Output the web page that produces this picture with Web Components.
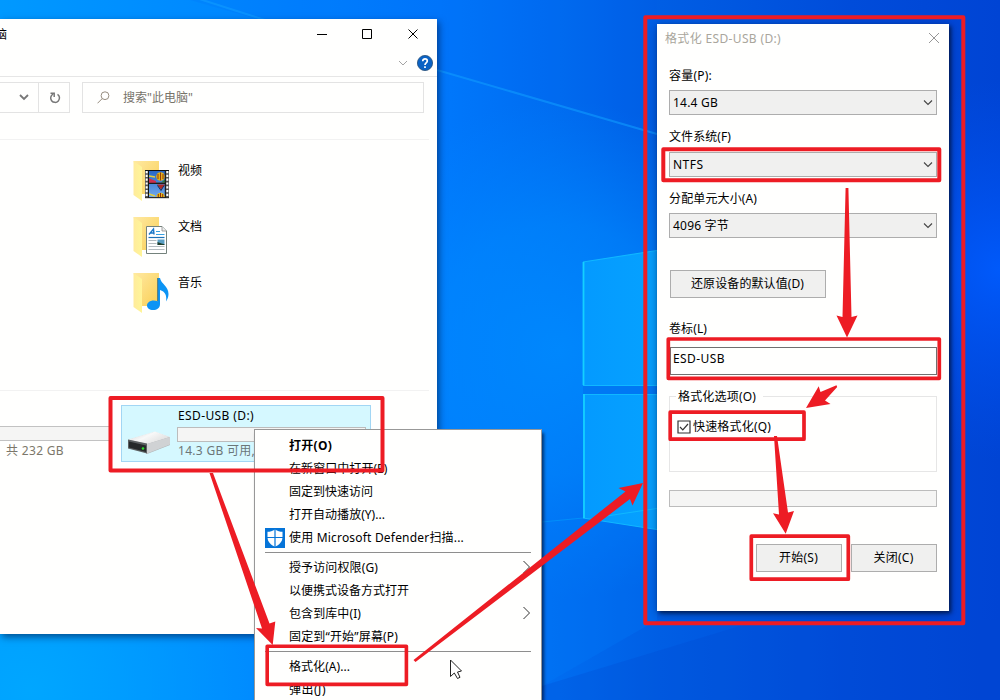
<!DOCTYPE html>
<html lang="zh-CN">
<head>
<meta charset="utf-8">
<title>格式化 ESD-USB</title>
<style>
html,body{margin:0;height:100%;overflow:hidden}
body{font-family:"Noto Sans","Noto Sans CJK SC",sans-serif;font-size:12px;line-height:16px;color:#000}
</style>
</head>
<body>
<desk-top></desk-top>
<script>
const define = (name, html, init) => {
  const t = document.createElement('template');
  t.innerHTML = html;
  customElements.define(name, class extends HTMLElement {
    connectedCallback() {
      if (this.shadowRoot) return;
      this.attachShadow({mode: 'open'}).appendChild(t.content.cloneNode(true));
      if (init) init(this, this.shadowRoot);
    }
  });
};

/* One-line label whose tracking is adjusted to a given width */
define('fit-text', `<style>
:host{display:inline-block;white-space:nowrap;flex:none}
span{display:inline-block}
</style><span><slot></slot></span>`, (el, root) => {
  const w = parseFloat(el.getAttribute('w'));
  if (!w) return;
  const s = root.querySelector('span');
  const natural = s.getBoundingClientRect().width;
  s.style.letterSpacing = ((w - natural) / el.textContent.length) + 'px';
});

define('desk-wallpaper', `<style>
:host{position:absolute;inset:0;display:block}
svg{display:block}
</style>
<svg width="1000" height="700" viewBox="0 0 1000 700">
<defs>
<linearGradient id="b" x1="0" y1="0" x2="1" y2="0"><stop offset="0" stop-color="#0099ff"/><stop offset=".3" stop-color="#0082ff"/><stop offset=".44" stop-color="#0078fc"/><stop offset=".56" stop-color="#006cf0"/><stop offset=".66" stop-color="#005ee4"/><stop offset=".85" stop-color="#004cda"/><stop offset="1" stop-color="#0044d4"/></linearGradient>
<radialGradient id="g" gradientUnits="userSpaceOnUse" cx="560" cy="350" r="250"><stop offset="0" stop-color="#008cff" stop-opacity=".85"/><stop offset=".5" stop-color="#008aff" stop-opacity=".6"/><stop offset="1" stop-color="#0084ff" stop-opacity="0"/></radialGradient>
<radialGradient id="r" gradientUnits="userSpaceOnUse" cx="1000" cy="270" r="190"><stop offset="0" stop-color="#005cff" stop-opacity=".9"/><stop offset="1" stop-color="#0050f0" stop-opacity="0"/></radialGradient>
<radialGradient id="l" gradientUnits="userSpaceOnUse" cx="30" cy="690" r="300"><stop offset="0" stop-color="#00a8ff" stop-opacity=".9"/><stop offset="1" stop-color="#009cff" stop-opacity="0"/></radialGradient>
<linearGradient id="p" x1="0" x2="1"><stop offset="0" stop-color="#049aff"/><stop offset="1" stop-color="#06a2ff"/></linearGradient>
</defs>
<rect width="1000" height="700" fill="url(#b)"/>
<rect width="1000" height="700" fill="url(#g)"/>
<rect width="1000" height="700" fill="url(#r)"/>
<rect width="1000" height="700" fill="url(#l)"/>
<path d="M437 70L657 134V0H190z" fill="#0058e8" opacity=".1"/>
<path d="M190 -4L265 20M437 70L657 134" stroke="#109cff" stroke-width="2" opacity=".6"/>
<path d="M542 686L760 620H1000V700H542z" fill="#0048d0" opacity=".25"/>
<path d="M542 522L583 518L657 529V620L542 686z" fill="#007cf8" opacity=".3"/>
<path d="M583 385H660V394H583z" fill="#0078f4"/>
<path d="M583 262L660 250V385H583z" fill="url(#p)"/>
<path d="M583 394H660V530L583 518z" fill="url(#p)"/>
<path d="M583 262L660 250M583 385.500H660M583 394.500H660M583 518L660 530M600 517L660 508" fill="none" stroke="#10b8ff" stroke-width="1.100"/>
<path d="M583.500 262V385M584 394V518" stroke="#14d0ff" stroke-width="1.800"/>
<path d="M542 522L583 518" stroke="#00a0ff" opacity=".6"/>
</svg>`);

define('folder-item', `<style>
:host{display:flex;height:56px;align-items:flex-start}
svg{margin:-2px 5px 0 0;flex:none}
fit-text{margin-top:1px}
</style>
<svg width="40" height="42" viewBox="0 0 40 42">
<defs><linearGradient id="f" x2="1"><stop offset="0" stop-color="#ffeb9c"/><stop offset="1" stop-color="#fff598"/></linearGradient>
<linearGradient id="k" x2="1" y2="1"><stop offset="0" stop-color="#ffe9a2"/><stop offset="1" stop-color="#f9cf55"/></linearGradient>
<linearGradient id="sky" x2="0" y2="1"><stop offset="0" stop-color="#2868c8"/><stop offset="1" stop-color="#70a8ec"/></linearGradient></defs>
<path d="M.500 1H26V34H9z" fill="url(#k)"/>
<path d="M.500 1L9 7V41L.500 35z" fill="url(#f)"/>
<g id="art"></g></svg><fit-text w="24.500"><slot></slot></fit-text>`, (el, root) => {
  const arts = {
    video: `<path d="M12 10H36V38H12z" fill="#555"/><path d="M13.700 11V38M34.300 11V38" stroke="#fff" stroke-width="2" stroke-dasharray="2.200 1.600"/><path d="M15.500 11H32V22.500H15.500zM15.500 24H32V37H15.500z" fill="url(#sky)"/><path d="M15.500 18L19 19.500 23 21V23H15.500z" fill="#cc3050"/><path d="M16 16l6 1M16 34l6 2" stroke="#e4d040" stroke-width="1.500"/><circle cx="27.500" cy="16.500" r="4.300" fill="#e7b018"/><path d="M27.500 12.500v8M25 14v5M30 14v5" stroke="#843010" stroke-width=".9"/><path d="M28 22.500l4-3v3z" fill="#30803c"/><path d="M24 24.500h8l-4 5z" fill="#b02a28"/><path d="M24.500 25.500l3.500 5 3-5" stroke="#182c58" fill="none"/><path d="M23.300 37a4.300 4.300 0 1 1 8.600 0z" fill="#e8bc18"/><path d="M27.500 33v4M25.300 34v3M29.700 34v3" stroke="#842010" stroke-width=".9"/><path d="M12 37.700h24" stroke="#222"/><path d="M15.500 23.300h16.700M15.500 10.500v27M32.300 10.500v27M12 10.500h24" stroke="#111"/>`,
    doc: `<path d="M13.500 10.500H29L33.500 15V37.500H13.500z" fill="#fff" stroke="#74827c"/><path d="M29 10.500V15h4.500" fill="#eee" stroke="#8a8a8a" stroke-width=".8"/><path d="M16 18.500L20.500 13l.5 5.500M17.500 17h3.500" stroke="#1b78c8" stroke-width="1.400" fill="none"/><path d="M23 15.500h4M23 18.500h8.500" stroke="#38a0e0"/><path d="M15.500 21.500h16" stroke="#1d72b8" stroke-width="1.200"/><path d="M15.500 24.500h8M15.500 27.500h8M15.500 30.500h16M15.500 33.500h16" stroke="#b4bcc0"/><path d="M24.500 23.500h7v5.500h-7z" fill="#5b9fc4"/><path d="M24.500 26l4 1.500 3 .8v.7h-7z" fill="#22402c"/>`,
    music: `<path d="M25 6h2c1 6 8.500 8 8.500 16 0 3-1 5-2.500 7.500 1-6-1-10-6-11.500V32c0 4-3 6-7 6-3.500 0-6-1.800-6-4.500s3-5 6.500-5c1.500 0 3 .300 4.500.8z" fill="#0c94f4"/><path d="M24.700 6V29" stroke="#3a6f86" stroke-width="1"/>`
  };
  root.querySelector('#art').innerHTML = arts[el.getAttribute('kind')];
});

define('drive-tile', `<style>
:host{display:flex;box-sizing:border-box;width:250px;height:57px;background:#d5f8ff;border:1px solid #a2d6f4}
svg{margin:25px 6px 0 5px;flex:none}
.c{display:flex;flex-direction:column;padding-top:2px;width:189px}
.bar{box-sizing:border-box;height:15px;width:189px;border:1px solid #bcbcbc;background:#f5f5f4;margin:3px 0 1px -1px}
.n{color:#6c7678}
</style>
<svg width="45" height="26" viewBox="0 0 45 26"><defs><linearGradient id="d" x2="1" y2=".6"><stop offset="0" stop-color="#d0d2d4"/><stop offset=".5" stop-color="#f8f8f8"/><stop offset="1" stop-color="#dedede"/></linearGradient></defs>
<path d="M1 9L28 1 43 6.500V14L20 23z" fill="#b0b3b5"/><path d="M1 8.500L28 .500 43 6 20 13z" fill="url(#d)"/><path d="M1 8.500L20 12.500V22.500L1 17.500z" fill="#5c6062"/><path d="M2 10.500L19 14.500v6.500L2 16.500z" fill="#26292a"/><path d="M20 13L43 6V13.500L20 22.500z" fill="#d0d2d4"/><circle cx="16" cy="17.500" r="1.300" fill="#2be02b"/></svg>
<div class="c"><fit-text w="76">ESD-USB (D:)</fit-text><div class="bar"></div><fit-text class="n" w="77">14.3 GB 可用,</fit-text></div>`);

define('explorer-window', `<style>
:host{position:absolute;left:0;top:19px;width:437px;height:615px;background:#fffffe;display:flex;flex-direction:column;box-shadow:2px 3px 7px rgba(0,25,70,.6)}
.title{height:30px;display:flex;align-items:center;overflow:hidden}
.title fit-text{margin:2px 0 0 -5px;flex:1}
.title svg{margin-right:16px}
.ribbon{height:27px;border-bottom:1px solid #e6e6e6;display:flex;align-items:center;justify-content:flex-end;padding-right:4px;gap:9px}
.nav{display:flex;height:31px;margin-top:5px}
.box{box-sizing:border-box;border:1px solid #e3e3e3;display:flex;align-items:center}
.a{width:39px;border-left:0;justify-content:flex-end;padding-right:9px}
.b{width:32px;margin-left:-1px;justify-content:center;padding-left:2px}
.s{width:342px;margin-left:12px;padding-left:14px;color:#77736a}
.s fit-text{margin:1px 0 0 13px}
.line{height:1px;background:#f2f2f2;width:429px}
.folders{padding:22px 0 0 133px;height:228px}
.drives{display:flex;justify-content:space-between;padding:14px 66px 0 0}
.prev{width:109px;padding-top:21px}
.pb{box-sizing:border-box;height:15px;border:1px solid #c2c2c2;border-width:1px 0;background:#f5f5f4}
.prev fit-text{margin:2px 0 0 6px;color:#7c776a}
</style>
<div class="title"><fit-text>脑</fit-text><svg width="106" height="14" viewBox="0 0 106 14" fill="none" stroke="#000"><path d="M2 7.500H12M47.500 2.500H56.500V11.500H47.500zM93.500 2.500L102.500 11.500M102.500 2.500L93.500 11.500"/></svg></div>
<div class="ribbon"><svg width="10" height="6" viewBox="0 0 10 6" fill="none" stroke="#a4a4a4"><path d="M1 1L5 5 9 1"/></svg>
<svg width="16" height="16" viewBox="0 0 16 16"><circle cx="8" cy="8" r="7.600" fill="#0a62c4" stroke="#244e78" stroke-width=".8"/><path d="M5.700 6.200C5.700 3 10.300 3.200 10.300 6 10.300 8 8 7.800 8 10M8 11.300V13" stroke="#fff" stroke-width="1.700" fill="none"/></svg></div>
<div class="nav"><div class="box a"><svg width="10" height="7" viewBox="0 0 10 7" fill="none" stroke="#777" stroke-width="1.800"><path d="M1 1L5 5 9 1"/></svg></div>
<div class="box b"><svg width="12" height="13" viewBox="0 0 12 13" fill="none" stroke="#777" stroke-width="1.500"><path d="M4 3.100A4.400 4.400 0 1 0 8.500 3.300M1.500 2.200H5.200V6"/></svg></div>
<div class="box s"><svg width="13" height="13" viewBox="0 0 13 13" fill="none" stroke="#978d80"><circle cx="8" cy="4.700" r="3.900"/><path d="M5.200 7.600L.500 12.300"/></svg><fit-text w="70">搜索"此电脑"</fit-text></div></div>
<div class="line" style="margin-top:26px"></div>
<div class="folders"><folder-item kind="video">视频</folder-item><folder-item kind="doc">文档</folder-item><folder-item kind="music">音乐</folder-item></div>
<div class="line"></div>
<div class="drives"><div class="prev"><div class="pb"></div><fit-text w="58">共 232 GB</fit-text></div><drive-tile></drive-tile></div>`);

define('menu-item', `<style>
:host{display:flex;align-items:center;height:23px;padding:0 10px 0 10px}
:host([bold]){font-weight:700}
.i{width:24px;height:20px;flex:none}
.t{flex:1}.i svg{display:block}.arr{display:none;margin-top:-2px}
:host([sub]) .arr{display:block}
:host(:not([shield])) .i svg{display:none}
</style><div class="i"><svg width="20" height="20" viewBox="0 0 20 20"><rect width="20" height="20" fill="#0574d8"/><path d="M10 1.500C12.500 3.300 15 3.800 17.500 3.800V9C17.500 14 14 17 10 18.800 6 17 2.500 14 2.500 9V3.800C5 3.800 7.500 3.300 10 1.500z" fill="#fff"/><path d="M10 1V19M2 9.500H18" stroke="#0574d8" stroke-width="1.200"/></svg></div><div class="t"><slot></slot></div><svg class="arr" width="9" height="14" viewBox="0 0 9 14" fill="none" stroke="#333"><path d="M1.500 1L7.500 7 1.500 13"/></svg>`);

define('menu-sep', `<style>:host{display:block;height:7px;padding:3px 10px 0;box-sizing:border-box}div{height:1px;background:#8e8e8e}</style><div></div>`);

define('context-menu', `<style>
:host{position:absolute;left:254px;top:429px;width:288px;height:290px;box-sizing:border-box;border:1px solid #989898;background:#fffffe;padding-top:4px;display:block;box-shadow:2px 4px 3px rgba(0,0,20,.6)}
</style>
<menu-item bold><fit-text w="43">打开(O)</fit-text></menu-item>
<menu-item><fit-text w="98.500">在新窗口中打开(E)</fit-text></menu-item>
<menu-item><fit-text w="84">固定到快速访问</fit-text></menu-item>
<menu-item><fit-text w="96">打开自动播放(Y)...</fit-text></menu-item>
<menu-item shield><fit-text w="175">使用 Microsoft Defender扫描...</fit-text></menu-item>
<menu-sep></menu-sep>
<menu-item sub><fit-text w="89">授予访问权限(G)</fit-text></menu-item>
<menu-item><fit-text w="120">以便携式设备方式打开</fit-text></menu-item>
<menu-item sub><fit-text w="72">包含到库中(I)</fit-text></menu-item>
<menu-item><fit-text w="109">固定到“开始”屏幕(P)</fit-text></menu-item>
<menu-sep></menu-sep>
<menu-item><fit-text w="61">格式化(A)...</fit-text></menu-item>
<menu-item><fit-text w="37">弹出(J)</fit-text></menu-item>`);

define('combo-box', `<style>
:host{box-sizing:border-box;width:268px;height:25px;border:1px solid #adadad;background:#f0f0ef;display:flex;align-items:center;justify-content:space-between;padding:1px 3px 0 3px}
svg{margin-top:-1px}
</style><slot></slot><svg width="10" height="7" viewBox="0 0 10 7" fill="none" stroke="#444" stroke-width="1.100"><path d="M1 1.500L5 5.500 9 1.500"/></svg>`);

define('push-button', `<style>
:host{box-sizing:border-box;height:28px;width:86px;border:1px solid #adadad;background:#f0f0ef;display:flex;align-items:center;justify-content:center;padding:0 1px 0 0}
</style><slot></slot>`);

define('format-dialog', `<style>
:host{position:absolute;left:657px;top:24px;width:292px;height:587px;box-sizing:border-box;background:#fffffe;display:flex;flex-direction:column;padding:0 12px;box-shadow:2px 2px 4px rgba(0,15,50,.75),0 3px 10px rgba(0,20,70,.4)}
.t{display:flex;justify-content:space-between;align-items:center;height:28px;margin:0 -3px 0 -4px;color:#a9a69c}
.t fit-text{margin-top:2px}
.lab{height:16px;position:relative;top:1px}
.in{box-sizing:border-box;height:28px;width:267px;margin-left:1px;border:1px solid #707070;padding:3px 0 0 2px}
.grp{box-sizing:border-box;border:1px solid #e6e6e6;height:76px;padding:0 8px}
.leg{background:#fffffe;width:85px;padding-left:2px;margin-left:-2px;height:16px;margin-top:-8px}
.ck{display:flex;margin-top:14px;gap:2px;align-items:center;height:16px;margin-left:-1px}
.pr{box-sizing:border-box;height:17px;border:1px solid #bcbcbc;background:#f5f5f4;margin-top:18px}
.bt{display:flex;justify-content:flex-end;gap:9px;margin-top:37px}
</style>
<div class="t"><fit-text w="116">格式化 ESD-USB (D:)</fit-text><svg width="12" height="12" viewBox="0 0 12 12" stroke="#969696"><path d="M1 1L11 11M11 1L1 11"/></svg></div>
<div class="lab" style="margin-top:15px"><fit-text w="43">容量(P):</fit-text></div>
<combo-box style="margin-top:7px"><fit-text w="45">14.4 GB</fit-text></combo-box>
<div class="lab" style="margin-top:13px"><fit-text w="62">文件系统(F)</fit-text></div>
<combo-box style="margin-top:8px"><fit-text w="30.500">NTFS</fit-text></combo-box>
<div class="lab" style="margin-top:13px"><fit-text w="88">分配单元大小(A)</fit-text></div>
<combo-box style="margin-top:7px"><fit-text w="56">4096 字节</fit-text></combo-box>
<push-button style="width:156px;margin:32px 0 0 1px"><fit-text w="113">还原设备的默认值(D)</fit-text></push-button>
<div class="lab" style="margin-top:22px"><fit-text w="38">卷标(L)</fit-text></div>
<div class="in" style="margin-top:11px"><fit-text w="52">ESD-USB</fit-text></div>
<div class="grp" style="margin-top:21px"><div class="leg"><fit-text w="78">格式化选项(O)</fit-text></div>
<div class="ck"><svg width="14" height="14" viewBox="0 0 14 14" fill="#fff" stroke="#333"><path d="M1 1H13V13H1z" stroke-width="1.200"/><path d="M3 7L5.800 9.800 11 4" fill="none" stroke-width="1.200"/></svg><fit-text w="78">快速格式化(Q)</fit-text></div></div>
<div class="pr"></div>
<div class="bt"><push-button><fit-text w="39">开始(S)</fit-text></push-button><push-button><fit-text w="40">关闭(C)</fit-text></push-button></div>`);

define('mark-up', `<style>:host{position:absolute;inset:0;display:block;pointer-events:none}svg{display:block}</style>
<svg width="1000" height="700" viewBox="0 0 1000 700">
<g fill="none" stroke="#ed1c24" stroke-width="4" stroke-linejoin="round">
<rect x="110.500" y="398" width="272" height="72.500"/>
<rect x="267.200" y="646.200" width="139.200" height="38.200" stroke-width="3.600"/>
<rect x="645.300" y="17.200" width="318" height="606"/>
<rect x="663.300" y="149.200" width="276" height="31"/>
<rect x="668.300" y="339" width="271" height="39.300" stroke-width="3.700"/>
<rect x="670.200" y="412.200" width="133.800" height="27" stroke-width="3.700"/>
<rect x="751.300" y="536.200" width="97" height="43" stroke-width="3.700"/>
</g>
<g fill="#ed1c24">
<path d="M209.500 473H213L269.500 623.500 275.300 621.500 272.700 645 256 628 262 628.500z"/>
<path d="M413.500 660L625.500 491.500 618.500 488 643 483 632.500 505.500 630 499 415.500 662z"/>
<path d="M845.600 188H848.400L851.500 317 857.500 315.500 847 337.500 836.500 315.500 842.500 317z"/>
<path d="M806 408L818.700 386.300 820.500 392 836.500 385.300 837.200 387 825 400.500 830.500 404z"/>
<path d="M774 436H777L788 512.500 794 511 785.700 533.700 773 513.300 779 514.500z"/>
</g>
<path d="M450.500 660V676.500L454.300 673 457.500 678.500 460 677.300 457.500 672 461.500 671z" fill="#fff" stroke="#222"/>
</svg>`);

define('desk-top', `<style>:host{position:relative;display:block;width:1000px;height:700px;overflow:hidden}</style>
<desk-wallpaper></desk-wallpaper><explorer-window></explorer-window><context-menu></context-menu><format-dialog></format-dialog><mark-up></mark-up>`);
</script>
</body>
</html>
